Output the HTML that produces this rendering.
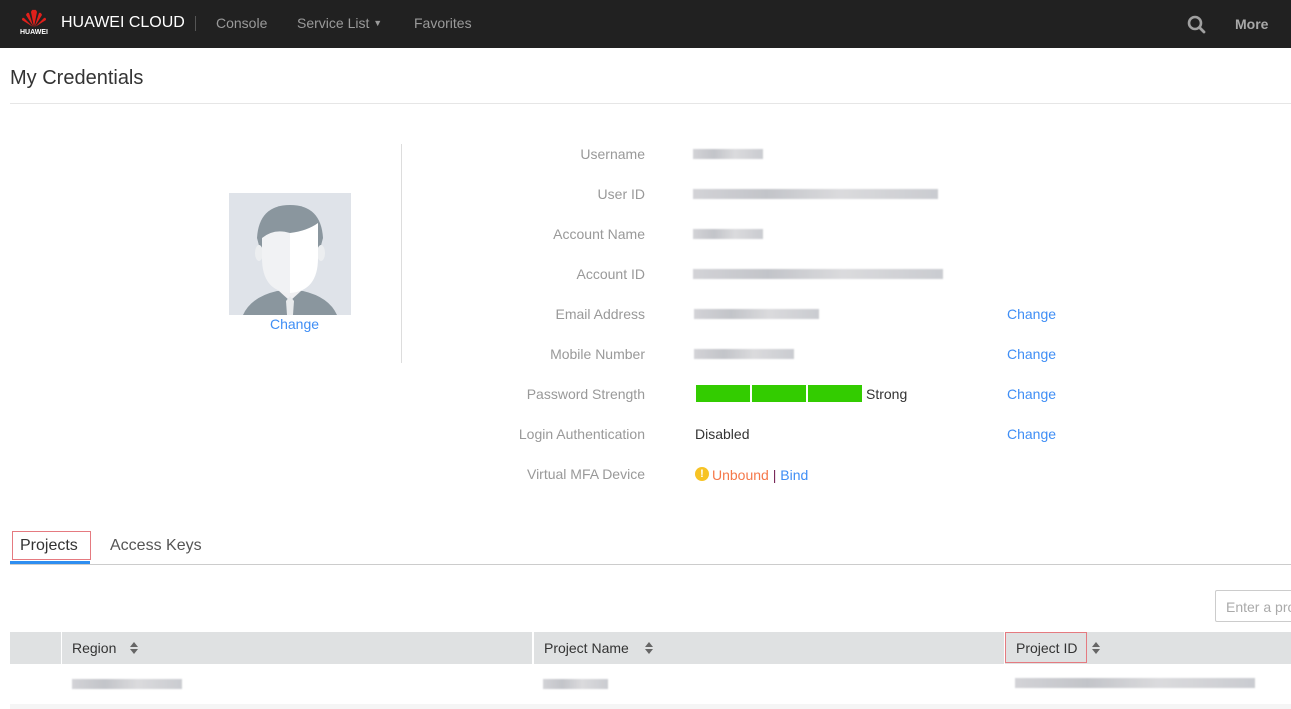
<!DOCTYPE html>
<html><head><meta charset="utf-8">
<style>
*{margin:0;padding:0;box-sizing:border-box}
body{width:1291px;height:709px;overflow:hidden;background:#fff;font-family:"Liberation Sans",Arial,sans-serif;position:relative}
.nav{position:absolute;left:0;top:0;width:1291px;height:48px;background:#212121}
.abs{position:absolute;white-space:nowrap}
.blur{position:absolute;height:10px;background:linear-gradient(90deg,#c8c8cd,#b4b6bc 30%,#d2d2d5 60%,#bdbfc5);filter:blur(0.8px);opacity:.8}
.chg{position:absolute;left:1007px;font-size:14px;color:#3f8ef5}
.th{position:absolute;top:632px;height:32px;background:#dfe1e2}
</style></head><body>
<div class="nav">
  <svg class="abs" style="left:21px;top:8px" width="26" height="20" viewBox="0 0 26 20">
    <g fill="#e0201b">
      <path d="M13 19 L10 4 Q11 1 13 2 Z"/><path d="M13 19 L16 4 Q15 1 13 2 Z"/>
      <path d="M12.5 19 L5 7 Q6 4 8 5 Z"/><path d="M13.5 19 L21 7 Q20 4 18 5 Z"/>
      <path d="M12 19 L1 12 Q1 9 3 10 Z"/><path d="M14 19 L25 12 Q25 9 23 10 Z"/>
    </g>
  </svg>
  <div class="abs" style="left:20px;top:29px;font-size:7px;color:#fff;font-weight:bold">HUAWEI</div>
  <div class="abs" style="left:61px;top:14px;font-size:16px;color:#fff">HUAWEI CLOUD</div>
  <div class="abs" style="left:195px;top:16px;width:1px;height:15px;background:#555"></div>
  <div class="abs" style="left:216px;top:15px;font-size:14px;color:#9a9a9a">Console</div>
  <div class="abs" style="left:297px;top:15px;font-size:14px;color:#9a9a9a">Service List <span style="font-size:9px;position:relative;top:-2px">▼</span></div>
  <div class="abs" style="left:414px;top:15px;font-size:14px;color:#9a9a9a">Favorites</div>
  <svg class="abs" style="left:1187px;top:15px" width="19" height="19" viewBox="0 0 19 19"><circle cx="8" cy="8" r="6" fill="none" stroke="#a0a0a0" stroke-width="2.6"/><path d="M12.5 12.5 L17 17" stroke="#a0a0a0" stroke-width="2.8" stroke-linecap="round"/></svg>
  <div class="abs" style="left:1235px;top:16px;font-size:14px;color:#a8a8a8;font-weight:bold">More</div>
</div>
<div class="abs" style="left:10px;top:67px;font-size:20px;color:#333">My Credentials</div>
<div class="abs" style="left:10px;top:103px;width:1281px;height:1px;background:#e6e6e6"></div>

<svg class="abs" style="left:229px;top:193px" width="122" height="122" viewBox="0 0 122 122">
  <rect width="122" height="122" fill="#dfe3e9"/>
  <path d="M14 122 Q22 104 48 98 L74 98 Q100 104 108 122 Z" fill="#8a969e"/>
  <path d="M50 98 L61 108 L72 98 L68 90 L54 90 Z" fill="#f0f0f2"/>
  <path d="M57 108 L61 103 L65 108 L64 122 L58 122 Z" fill="#e8eaec"/>
  <path d="M28 45 Q30 12 61 12 Q92 12 94 45 L90 60 L32 60 Z" fill="#8a969e"/>
  <ellipse cx="30" cy="60" rx="4" ry="8" fill="#eceef0"/><ellipse cx="92" cy="60" rx="4" ry="8" fill="#eceef0"/>
  <path d="M33 45 Q45 35 61 40 L61 100 Q33 98 33 65 Z" fill="#f1f2f4"/>
  <path d="M61 40 Q78 38 89 30 L89 65 Q89 98 61 100 Z" fill="#ffffff"/>
</svg>
<div class="abs" style="left:270px;top:316px;font-size:14px;color:#3f8ef5">Change</div>
<div class="abs" style="left:401px;top:144px;width:1px;height:219px;background:#ddd"></div>

<div class="abs" style="left:400px;width:245px;top:134px;font-size:14px;color:#999;text-align:right;line-height:40px">
Username<br>User ID<br>Account Name<br>Account ID<br>Email Address<br>Mobile Number<br>Password Strength<br>Login Authentication<br>Virtual MFA Device</div>

<div class="blur" style="left:693px;top:149px;width:70px"></div>
<div class="blur" style="left:693px;top:189px;width:245px"></div>
<div class="blur" style="left:693px;top:229px;width:70px"></div>
<div class="blur" style="left:693px;top:269px;width:250px"></div>
<div class="blur" style="left:694px;top:309px;width:125px"></div>
<div class="blur" style="left:694px;top:349px;width:100px"></div>

<div class="chg" style="top:306px">Change</div>
<div class="chg" style="top:346px">Change</div>
<div class="chg" style="top:386px">Change</div>
<div class="chg" style="top:426px">Change</div>

<div class="abs" style="left:696px;top:385px;width:54px;height:17px;background:#33cc00"></div>
<div class="abs" style="left:752px;top:385px;width:54px;height:17px;background:#33cc00"></div>
<div class="abs" style="left:808px;top:385px;width:54px;height:17px;background:#33cc00"></div>
<div class="abs" style="left:866px;top:386px;font-size:14px;color:#333">Strong</div>
<div class="abs" style="left:695px;top:426px;font-size:14px;color:#333">Disabled</div>
<div class="abs" style="left:695px;top:467px;width:14px;height:14px;border-radius:50%;background:#f7c325;color:#fff;font-size:11px;font-weight:bold;text-align:center;line-height:14px">!</div>
<div class="abs" style="left:712px;top:467px;font-size:14px;color:#f5784a">Unbound <span style="color:#7a2a5a">|</span> <span style="color:#3f8ef5">Bind</span></div>

<div class="abs" style="left:12px;top:531px;width:79px;height:29px;border:1px solid #e57a80"></div>
<div class="abs" style="left:20px;top:537px;font-size:16px;color:#333">Projects</div>
<div class="abs" style="left:110px;top:537px;font-size:16px;color:#555">Access Keys</div>
<div class="abs" style="left:10px;top:564px;width:1281px;height:1px;background:#ccc"></div>
<div class="abs" style="left:10px;top:561px;width:80px;height:3px;background:#2e8ef0"></div>

<div class="abs" style="left:1215px;top:590px;width:90px;height:32px;border:1px solid #ccc;border-radius:2px;font-size:14px;color:#aaa;padding:8px 10px">Enter a pro</div>

<div class="th" style="left:10px;width:51px"></div>
<div class="th" style="left:62px;width:470px"></div>
<div class="th" style="left:534px;width:470px"></div>
<div class="th" style="left:1005px;width:286px"></div>
<div class="abs" style="left:72px;top:640px;font-size:14px;color:#333">Region</div>
<div class="abs" style="left:544px;top:640px;font-size:14px;color:#333">Project Name</div>
<div class="abs" style="left:1005px;top:632px;width:82px;height:31px;border:1px solid #e57a80"></div>
<div class="abs" style="left:1016px;top:640px;font-size:14px;color:#333">Project ID</div>
<svg class="abs" style="left:130px;top:642px" width="8" height="12"><path d="M0 5 L4 0 L8 5Z M0 7 L4 12 L8 7Z" fill="#666"/></svg>
<svg class="abs" style="left:645px;top:642px" width="8" height="12"><path d="M0 5 L4 0 L8 5Z M0 7 L4 12 L8 7Z" fill="#666"/></svg>
<svg class="abs" style="left:1092px;top:642px" width="8" height="12"><path d="M0 5 L4 0 L8 5Z M0 7 L4 12 L8 7Z" fill="#666"/></svg>

<div class="blur" style="left:72px;top:679px;width:110px"></div>
<div class="blur" style="left:543px;top:679px;width:65px"></div>
<div class="blur" style="left:1015px;top:678px;width:240px"></div>
<div class="abs" style="left:10px;top:704px;width:1281px;height:5px;background:#f5f5f5"></div>
</body></html>
